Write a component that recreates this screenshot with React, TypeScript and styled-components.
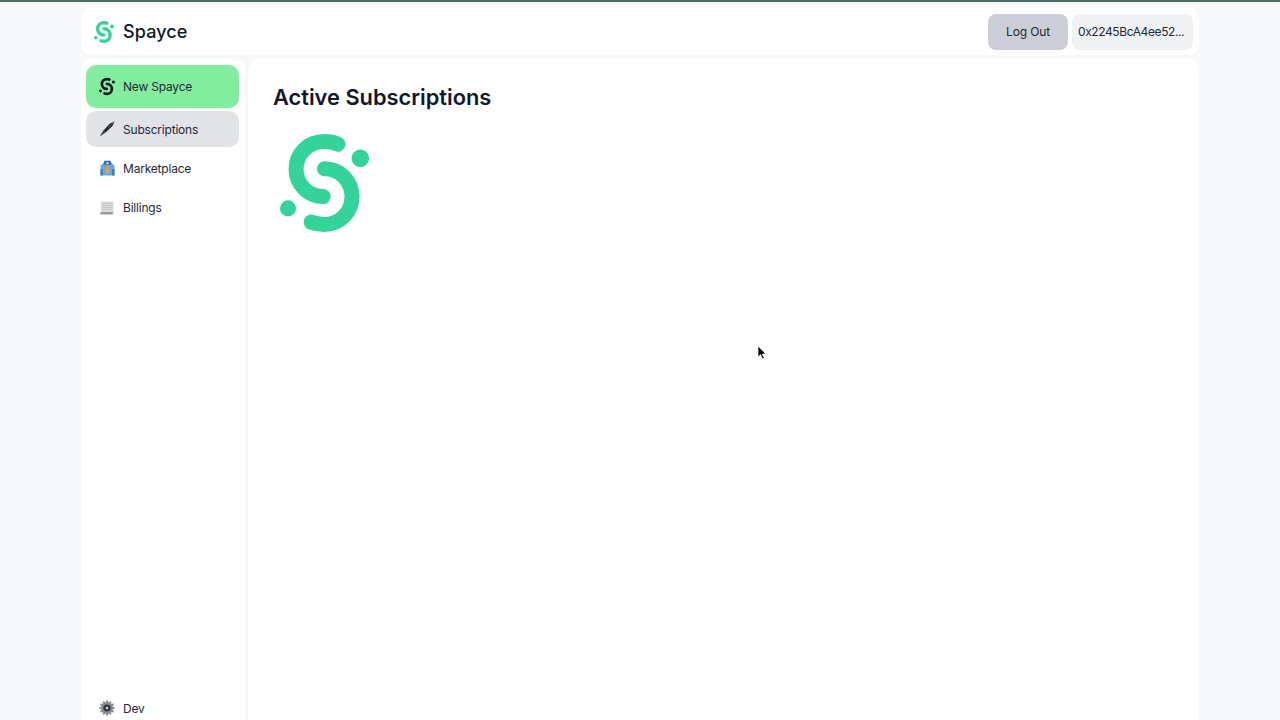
import styled, { createGlobalStyle } from "styled-components";

const GlobalStyle = createGlobalStyle`
  html, body {
    margin: 0;
    height: 720px;
    overflow: hidden;
    background: #f6f8fa;
    font-family: "Inter", "Liberation Sans", sans-serif;
    color: #111827;
  }
`;

const TopStrip = styled.div`
  height: 2px;
  background: #4d6b60;
`;

const Page = styled.div`
  position: relative;
  width: 1118px;
  height: 726px;
  margin: 0 auto;
  padding-top: 6px;
  box-sizing: border-box;
  display: flex;
  flex-direction: column;
  gap: 4px;
`;

const Header = styled.header`
  height: 47px;
  flex-shrink: 0;
  background: #fff;
  border-radius: 10px;
  display: flex;
  align-items: center;
  justify-content: space-between;
  padding: 0 6px 0 13px;
`;

const Brand = styled.div`
  display: flex;
  align-items: center;
  gap: 9px;
  font-size: 18px;
  font-weight: 500;
  letter-spacing: 0.1px;
`;

const HeaderActions = styled.div`
  display: flex;
  gap: 4px;
`;

const HeaderButton = styled.button<{ $muted?: boolean }>`
  height: 36px;
  width: ${(p) => (p.$muted ? "121px" : "80px")};
  border: none;
  border-radius: 8px;
  background: ${(p) => (p.$muted ? "#f0f1f3" : "#cbced6")};
  color: #1f2937;
  font-family: inherit;
  font-size: 12px;
  letter-spacing: ${(p) => (p.$muted ? "-0.4px" : "-0.15px")};
  text-align: ${(p) => (p.$muted ? "left" : "center")};
  padding: ${(p) => (p.$muted ? "0 0 0 6px" : "0")};
`;

const Body = styled.div`
  flex: 1;
  min-height: 0;
  display: flex;
  gap: 3px;
`;

const Sidebar = styled.aside`
  width: 164px;
  flex-shrink: 0;
  background: #fff;
  border-radius: 10px 10px 0 0;
  box-sizing: border-box;
  padding: 6px 6px 0 5px;
  display: flex;
  flex-direction: column;
`;

const NavItem = styled.div<{ $variant?: "primary" | "active" }>`
  height: ${(p) => (p.$variant === "primary" ? "43px" : p.$variant === "active" ? "36px" : "39.5px")};
  margin-bottom: ${(p) => (p.$variant === "primary" ? "3px" : p.$variant === "active" ? "1.5px" : "0")};
  flex-shrink: 0;
  display: flex;
  align-items: center;
  gap: 8px;
  padding-left: 13px;
  border-radius: 10px;
  font-size: 12px;
  letter-spacing: -0.2px;
  color: #1f2937;
  background: ${(p) =>
    p.$variant === "primary" ? "#82ed9f" : p.$variant === "active" ? "#e1e3e7" : "transparent"};
`;

const IconSlot = styled.span`
  width: 16px;
  height: 20px;
  display: flex;
  align-items: center;
  justify-content: center;
  flex-shrink: 0;
`;

const BottomNav = styled.div`
  margin-top: auto;
`;

const Main = styled.main`
  flex: 1;
  background: #fff;
  border-radius: 12px 12px 0 0;
  padding: 24px 24px 0 25px;
`;

const Title = styled.h1`
  margin: 0 0 23px;
  font-size: 21.8px;
  line-height: 28px;
  font-weight: 600;
  color: #111827;
`;

const HeroLogo = styled.div`
  margin-left: 7px;
`;

const Cursor = styled.svg`
  position: absolute;
  left: 676px;
  top: 343px;
`;

function SpayceLogo({ size, color }: { size: number; color: string }) {
  return (
    <svg width={(size * 89) / 97.6} height={size} viewBox="5 3.9 89 97.6" style={{ display: "block" }}>
      <path
        d="M62.7 14C58 12 54 11.4 49 11.4C33 11.4 21 23.5 21 38.8C21 54 33 66.2 48 66.2"
        fill="none"
        stroke={color}
        strokeWidth="15"
        strokeLinecap="round"
      />
      <path
        d="M49.3 38.5C65 38.5 76.7 51 76.7 66.4C76.7 82 64.5 94 49 94C44 94 40 93.2 36 91.7"
        fill="none"
        stroke={color}
        strokeWidth="15"
        strokeLinecap="round"
      />
      <circle cx="85" cy="28" r="8.7" fill={color} />
      <circle cx="13" cy="78" r="8" fill={color} />
    </svg>
  );
}

function PenIcon() {
  return (
    <svg width="16" height="16" viewBox="0 0 16 16">
      <path d="M15.6.4 11 2.6 4.4 9.4l2.2 2.2 6.8-6.6z" fill="#23272e" />
      <path d="M4.4 9.4.6 15.4l6-3.8z" fill="#3a3f47" />
      <path d="M15.4.6 9.5 6.5" stroke="#8b9099" strokeWidth=".5" />
    </svg>
  );
}

function ShirtIcon() {
  return (
    <svg width="15" height="16" viewBox="0 0 15 16">
      <path d="M.5 15.5V5.5L4.5 2.5h6l4 3v10z" fill="#6aa7dc" />
      <path d="M4.5.8h6l1.2 3-4.2 2.4-4.2-2.4z" fill="#2c6cb0" />
      <path d="M5.7 2.4h3.6L7.5 4.8z" fill="#e9edf2" />
      <path d="M6.7 4.8h1.6l.8 7-1.6 2.6-1.6-2.6z" fill="#e0a243" />
      <path d="M.5 15.5V9H3v6.5zM12 15.5V9h2.5v6.5z" fill="#3f7fc0" />
    </svg>
  );
}

function PaperIcon() {
  return (
    <svg width="16" height="16" viewBox="0 0 16 16">
      <path d="M2 1.5h12.5v10.5H2z" fill="#d8d9d8" />
      <path d="M3.5 3.5h9.5M3.5 5.5h9.5M3.5 7.5h9.5M3.5 9.5h9.5" stroke="#c2c3c2" strokeWidth=".7" />
      <path d="M2 12h12.5l-1 2.5H.6z" fill="#9b9c9b" />
    </svg>
  );
}

function GearIcon() {
  const teeth = Array.from({ length: 12 }, (_, i) => i * 30);
  return (
    <svg width="16" height="16" viewBox="0 0 16 16">
      {teeth.map((a) => (
        <rect key={a} x="7" y=".4" width="2" height="3" fill="#8d9196" transform={`rotate(${a} 8 8)`} />
      ))}
      <circle cx="8" cy="8" r="6" fill="#858a90" />
      <circle cx="8" cy="8" r="3.6" fill="#34383e" />
      <circle cx="8" cy="8" r="1.3" fill="#c9ccd0" />
    </svg>
  );
}

export default function App() {
  return (
    <>
      <GlobalStyle />
      <TopStrip />
      <Page>
        <Header>
          <Brand>
            <SpayceLogo size={22} color="#34d399" />
            Spayce
          </Brand>
          <HeaderActions>
            <HeaderButton>Log Out</HeaderButton>
            <HeaderButton $muted>0x2245BcA4ee52...</HeaderButton>
          </HeaderActions>
        </Header>
        <Body>
          <Sidebar>
            <NavItem $variant="primary">
              <IconSlot>
                <SpayceLogo size={19} color="#111827" />
              </IconSlot>
              New Spayce
            </NavItem>
            <NavItem $variant="active">
              <IconSlot>
                <PenIcon />
              </IconSlot>
              Subscriptions
            </NavItem>
            <NavItem>
              <IconSlot>
                <ShirtIcon />
              </IconSlot>
              Marketplace
            </NavItem>
            <NavItem>
              <IconSlot>
                <PaperIcon />
              </IconSlot>
              Billings
            </NavItem>
            <BottomNav>
              <NavItem>
                <IconSlot>
                  <GearIcon />
                </IconSlot>
                Dev
              </NavItem>
            </BottomNav>
          </Sidebar>
          <Main>
            <Title>Active Subscriptions</Title>
            <HeroLogo>
              <SpayceLogo size={98} color="#34d399" />
            </HeroLogo>
          </Main>
        </Body>
        <Cursor width="10" height="16" viewBox="0 0 10 16">
          <path d="M1 1v11l2.6-2.4L5.4 14l1.8-.8-1.8-4.2H9z" fill="#000" stroke="#fff" strokeWidth=".7" />
        </Cursor>
      </Page>
    </>
  );
}
